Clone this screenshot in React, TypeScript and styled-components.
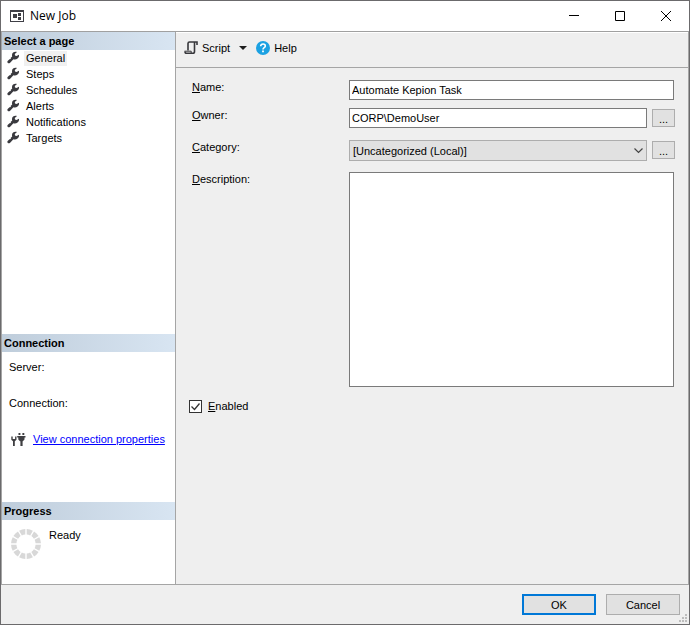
import React from "react";
import styled, { createGlobalStyle, css } from "styled-components";

const GlobalStyle = createGlobalStyle`
  *, *::before, *::after { box-sizing: border-box; }
  body {
    margin: 0;
    font: 11px/16px "Liberation Sans", Arial, sans-serif;
    color: #000;
  }
  button, input, select, textarea { font: inherit; color: inherit; margin: 0; border-radius: 0; }
  svg { display: block; flex: none; }
`;

const Window = styled.div`
  display: flex;
  flex-direction: column;
  min-height: 100vh;
  border: 1px solid #6b6a6c;
  background: #efefef;
`;

const TitleBar = styled.header`
  display: flex;
  align-items: center;
  height: 31px;
  padding-left: 9px;
  background: #fff;
  border-bottom: 1px solid #a0a0a0;
`;

const Title = styled.h1`
  flex: 1;
  margin: 0 0 0 6px;
  font: 12px/16px "Open Sans", "Noto Sans", sans-serif;
`;

const CaptionButton = styled.button`
  display: grid;
  place-items: center;
  width: 46px;
  height: 30px;
  padding: 0;
  border: 0;
  background: none;
`;

const Body = styled.div`
  display: flex;
  flex: 1;
  border: 1px solid #a5a5a5;
  border-top: 0;
`;

const Sidebar = styled.aside`
  display: flex;
  flex-direction: column;
  width: 174px;
  flex: none;
  background: #fff;
  border-right: 1px solid #a5a5a5;
`;

const Section = styled.section<{ $height?: number }>`
  ${(p) => (p.$height ? css`flex: none; height: ${p.$height}px;` : css`flex: 1;`)}
`;

const SectionTitle = styled.h2`
  margin: 0;
  height: 18px;
  padding-left: 2px;
  font-size: 11px;
  line-height: 18px;
  font-weight: bold;
  background: linear-gradient(90deg, #bfcddb, #d8e5f2);
`;

const PageList = styled.ul`
  list-style: none;
  margin: 0;
  padding: 0 0 0 5px;
`;

const PageLink = styled.button<{ $selected: boolean }>`
  display: flex;
  align-items: center;
  gap: 4px;
  height: 16px;
  padding: 0;
  border: 0;
  background: none;
  span {
    padding: 0 2px;
    line-height: 15px;
    background: ${(p) => (p.$selected ? "#f0f0f0" : "transparent")};
  }
`;

const ConnectionInfo = styled.div`
  display: flex;
  flex-direction: column;
  gap: 20px;
  padding: 7px;
`;

const ConnectionLink = styled.div`
  display: flex;
  align-items: center;
  gap: 7px;
  padding-left: 2px;
  a { color: #0000ff; }
`;

const ProgressInfo = styled.div`
  display: flex;
  gap: 7px;
  padding: 7px 8px;
  svg { margin-top: 1px; }
`;

const Main = styled.main`
  flex: 1;
  min-width: 0;
`;

const Toolbar = styled.div`
  display: flex;
  align-items: center;
  height: 36px;
  padding: 0 0 4px 8px;
  border-top: 1px solid #fff;
  border-bottom: 1px solid #a5a5a5;
`;

const ToolButton = styled.button`
  display: flex;
  align-items: center;
  gap: 4px;
  padding: 0;
  border: 0;
  background: none;
`;

const DropArrow = styled(ToolButton)`
  justify-content: center;
  width: 26px;
  height: 20px;
`;

const Form = styled.form`
  padding: 12px 14px 0 13px;
`;

const Row = styled.div<{ $gap?: number }>`
  display: flex;
  align-items: flex-start;
  margin-top: ${(p) => p.$gap ?? 0}px;
`;

const Label = styled.label`
  flex: none;
  width: 160px;
  padding-left: 3px;
  line-height: 15px;
`;

const fieldBorder = css`
  flex: 1;
  min-width: 0;
  border: 1px solid #7a7a7a;
  background: #fff;
  outline: none;
`;

const TextInput = styled.input`
  ${fieldBorder}
  height: 20px;
  padding: 0 2px;
`;

const TextArea = styled.textarea`
  ${fieldBorder}
  height: 215px;
  padding: 2px;
  resize: none;
`;

const SelectBox = styled.div`
  display: grid;
  flex: 1;
  align-items: center;
  select, svg { grid-area: 1 / 1; }
  svg { justify-self: end; margin-right: 4px; pointer-events: none; }
`;

const Select = styled.select`
  appearance: none;
  width: 100%;
  height: 21px;
  padding: 0 20px 0 3px;
  border: 1px solid #adadad;
  background: #e1e1e1;
`;

const PushButton = styled.button<{ $primary?: boolean }>`
  width: 74px;
  height: 21px;
  padding: 0;
  border: ${(p) => (p.$primary ? "2px solid #0078d7" : "1px solid #adadad")};
  background: #e1e1e1;
`;

const BrowseButton = styled(PushButton)`
  flex: none;
  width: 23px;
  height: 18px;
  margin: 1px -1px 0 5px;
  padding-top: 2px;
  line-height: 14px;
`;

const CheckLabel = styled.label`
  display: inline-flex;
  align-items: center;
  gap: 6px;
  margin-top: 11px;
`;

const CheckBox = styled.span`
  display: grid;
  input, svg { grid-area: 1 / 1; }
  input {
    appearance: none;
    width: 13px;
    height: 13px;
    border: 1px solid #333;
    background: #fff;
  }
  svg { pointer-events: none; visibility: hidden; }
  input:checked + svg { visibility: visible; }
`;

const Footer = styled.footer`
  display: flex;
  justify-content: flex-end;
  gap: 10px;
  height: 39px;
  padding: 9px 0 0;
`;

const Grip = styled.svg`
  align-self: flex-end;
  margin: 0 2px 2px -11px;
`;

const AppIcon = () => (
  <svg width="14" height="12" viewBox="0 0 14 12" shapeRendering="crispEdges">
    <path d="M0 0h14v12H0z" fill="#3f3f46" />
    <path d="M1 2h12v9H1z" fill="#fff" />
    <path d="M3 4h4v4H3zM8 3h3v3H8zM8 7h3v3H8z" fill="#3f3f46" />
  </svg>
);

const Wrench = () => (
  <svg width="13" height="14" viewBox="0 0 13 14">
    <path
      d="M2.900 11.900 6.400 8.300c2.500.7 5.200-.5 5.600-3 .1-.7 0-1.100-.1-1.500L9.600 4.900 8 4.500l-.2-1.600L10 .9C7.600.1 5.100 1.300 5 3.900c0 .6 0 1 .2 1.500L3.600 7.100 4 8.100l-1.500.1L.9 9.800c-.7.700-.7 1.500-.1 2.100.6.600 1.400.600 2.100 0z"
      fill="#3a3a3f"
    />
  </svg>
);

const ScriptIcon = () => (
  <svg width="14" height="14" viewBox="0 0 14 14" fill="none" stroke="#38383c">
    <path d="M4 9.500V2.500Q4 1 5.500 1H13v3" strokeWidth="1.600" />
    <path d="M10.500 1V10.500q0 1.800-1.600 1.800H2.500Q1 12.300 1 10.500" strokeWidth="1.600" />
    <path d="M.5 10.200h6.700v1.800" strokeWidth="1" />
  </svg>
);

const HelpIcon = () => (
  <svg width="14" height="14" viewBox="0 0 14 14">
    <circle cx="7" cy="7" r="7" fill="#1ba1e2" />
    <path d="M4.700 5.300C4.700 3.700 5.600 3 7 3s2.300.8 2.300 2C9.300 6.700 7 6.600 7 8.400" fill="none" stroke="#fff" strokeWidth="1.600" />
    <path d="M6.100 9.500h1.800v1.700H6.100z" fill="#fff" />
  </svg>
);

const PlugIcon = () => (
  <svg width="15" height="15" viewBox="0 0 15 15" fill="#3f3f42">
    <path d="M.3 4.500v3.200l1.700 1.500V14h1.800V9.200L5.500 7.700V4.500H4.100V7H1.700V4.500z" />
    <path d="M7.500 1h1.900v2H7.500zM11.400 1h1.900v2h-1.900zM6.200 4h8.300v1.400h-1v2.200l-1.700 1.600h-.2V14H9.400V9.200H9L7.300 7.600V5.400H6.200z" />
  </svg>
);

const Spinner = () => (
  <svg width="32" height="32" viewBox="0 0 32 32">
    <g fill="#d8d8d8">
      {Array.from({ length: 12 }, (_, i) => (
        <path key={i} d="M12.800 1.400Q16 .6 19.200 1.400L17.800 6.600Q16 6.200 14.200 6.600z" transform={`rotate(${i * 30 + 15} 16 16)`} />
      ))}
    </g>
  </svg>
);

const pages = ["General", "Steps", "Schedules", "Alerts", "Notifications", "Targets"];

export default function App() {
  const [page, setPage] = React.useState("General");
  return (
    <>
      <GlobalStyle />
      <Window>
        <TitleBar>
          <AppIcon />
          <Title>New Job</Title>
          <CaptionButton aria-label="Minimize">
            <svg width="10" height="10"><path d="M0 4.500h10" stroke="#000" /></svg>
          </CaptionButton>
          <CaptionButton aria-label="Maximize">
            <svg width="10" height="10"><path d="M.5.5h9v9h-9z" fill="none" stroke="#000" /></svg>
          </CaptionButton>
          <CaptionButton aria-label="Close">
            <svg width="10" height="10"><path d="M0 0l10 10M10 0L0 10" stroke="#000" /></svg>
          </CaptionButton>
        </TitleBar>
        <Body>
          <Sidebar>
            <Section>
              <SectionTitle>Select a page</SectionTitle>
              <PageList>
                {pages.map((name) => (
                  <li key={name}>
                    <PageLink $selected={name === page} onClick={() => setPage(name)}>
                      <Wrench />
                      <span>{name}</span>
                    </PageLink>
                  </li>
                ))}
              </PageList>
            </Section>
            <Section $height={168}>
              <SectionTitle>Connection</SectionTitle>
              <ConnectionInfo>
                <div>Server:</div>
                <div>Connection:</div>
                <ConnectionLink>
                  <PlugIcon />
                  <a href="#connection">View connection properties</a>
                </ConnectionLink>
              </ConnectionInfo>
            </Section>
            <Section $height={82}>
              <SectionTitle>Progress</SectionTitle>
              <ProgressInfo>
                <Spinner />
                <span>Ready</span>
              </ProgressInfo>
            </Section>
          </Sidebar>
          <Main>
            <Toolbar>
              <ToolButton><ScriptIcon />Script</ToolButton>
              <DropArrow aria-label="Script options">
                <svg width="8" height="4"><path d="M0 0h8L4 4z" fill="#1e1e1e" /></svg>
              </DropArrow>
              <ToolButton><HelpIcon />Help</ToolButton>
            </Toolbar>
            <Form onSubmit={(e) => e.preventDefault()}>
              <Row>
                <Label htmlFor="name"><u>N</u>ame:</Label>
                <TextInput id="name" defaultValue="Automate Kepion Task" />
              </Row>
              <Row $gap={8}>
                <Label htmlFor="owner"><u>O</u>wner:</Label>
                <TextInput id="owner" defaultValue="CORP\DemoUser" />
                <BrowseButton type="button" aria-label="Browse owners">...</BrowseButton>
              </Row>
              <Row $gap={12}>
                <Label htmlFor="category"><u>C</u>ategory:</Label>
                <SelectBox>
                  <Select id="category">
                    <option>[Uncategorized (Local)]</option>
                  </Select>
                  <svg width="9" height="6"><path d="M.5.5l4 4 4-4" fill="none" stroke="#444" strokeWidth="1.200" /></svg>
                </SelectBox>
                <BrowseButton type="button" aria-label="Browse categories">...</BrowseButton>
              </Row>
              <Row $gap={11}>
                <Label htmlFor="description"><u>D</u>escription:</Label>
                <TextArea id="description" />
              </Row>
              <CheckLabel>
                <CheckBox>
                  <input type="checkbox" defaultChecked />
                  <svg width="13" height="13"><path d="M2.500 6.500l3 3 5-6" fill="none" stroke="#333" strokeWidth="1.300" /></svg>
                </CheckBox>
                <span><u>E</u>nabled</span>
              </CheckLabel>
            </Form>
          </Main>
        </Body>
        <Footer>
          <PushButton $primary>OK</PushButton>
          <PushButton>Cancel</PushButton>
          <Grip width="8" height="8" fill="#bdbdbd">
            <path d="M6 0h2v2H6zM3 3h2v2H3zM6 3h2v2H6zM0 6h2v2H0zM3 6h2v2H3zM6 6h2v2H6z" />
          </Grip>
        </Footer>
      </Window>
    </>
  );
}
